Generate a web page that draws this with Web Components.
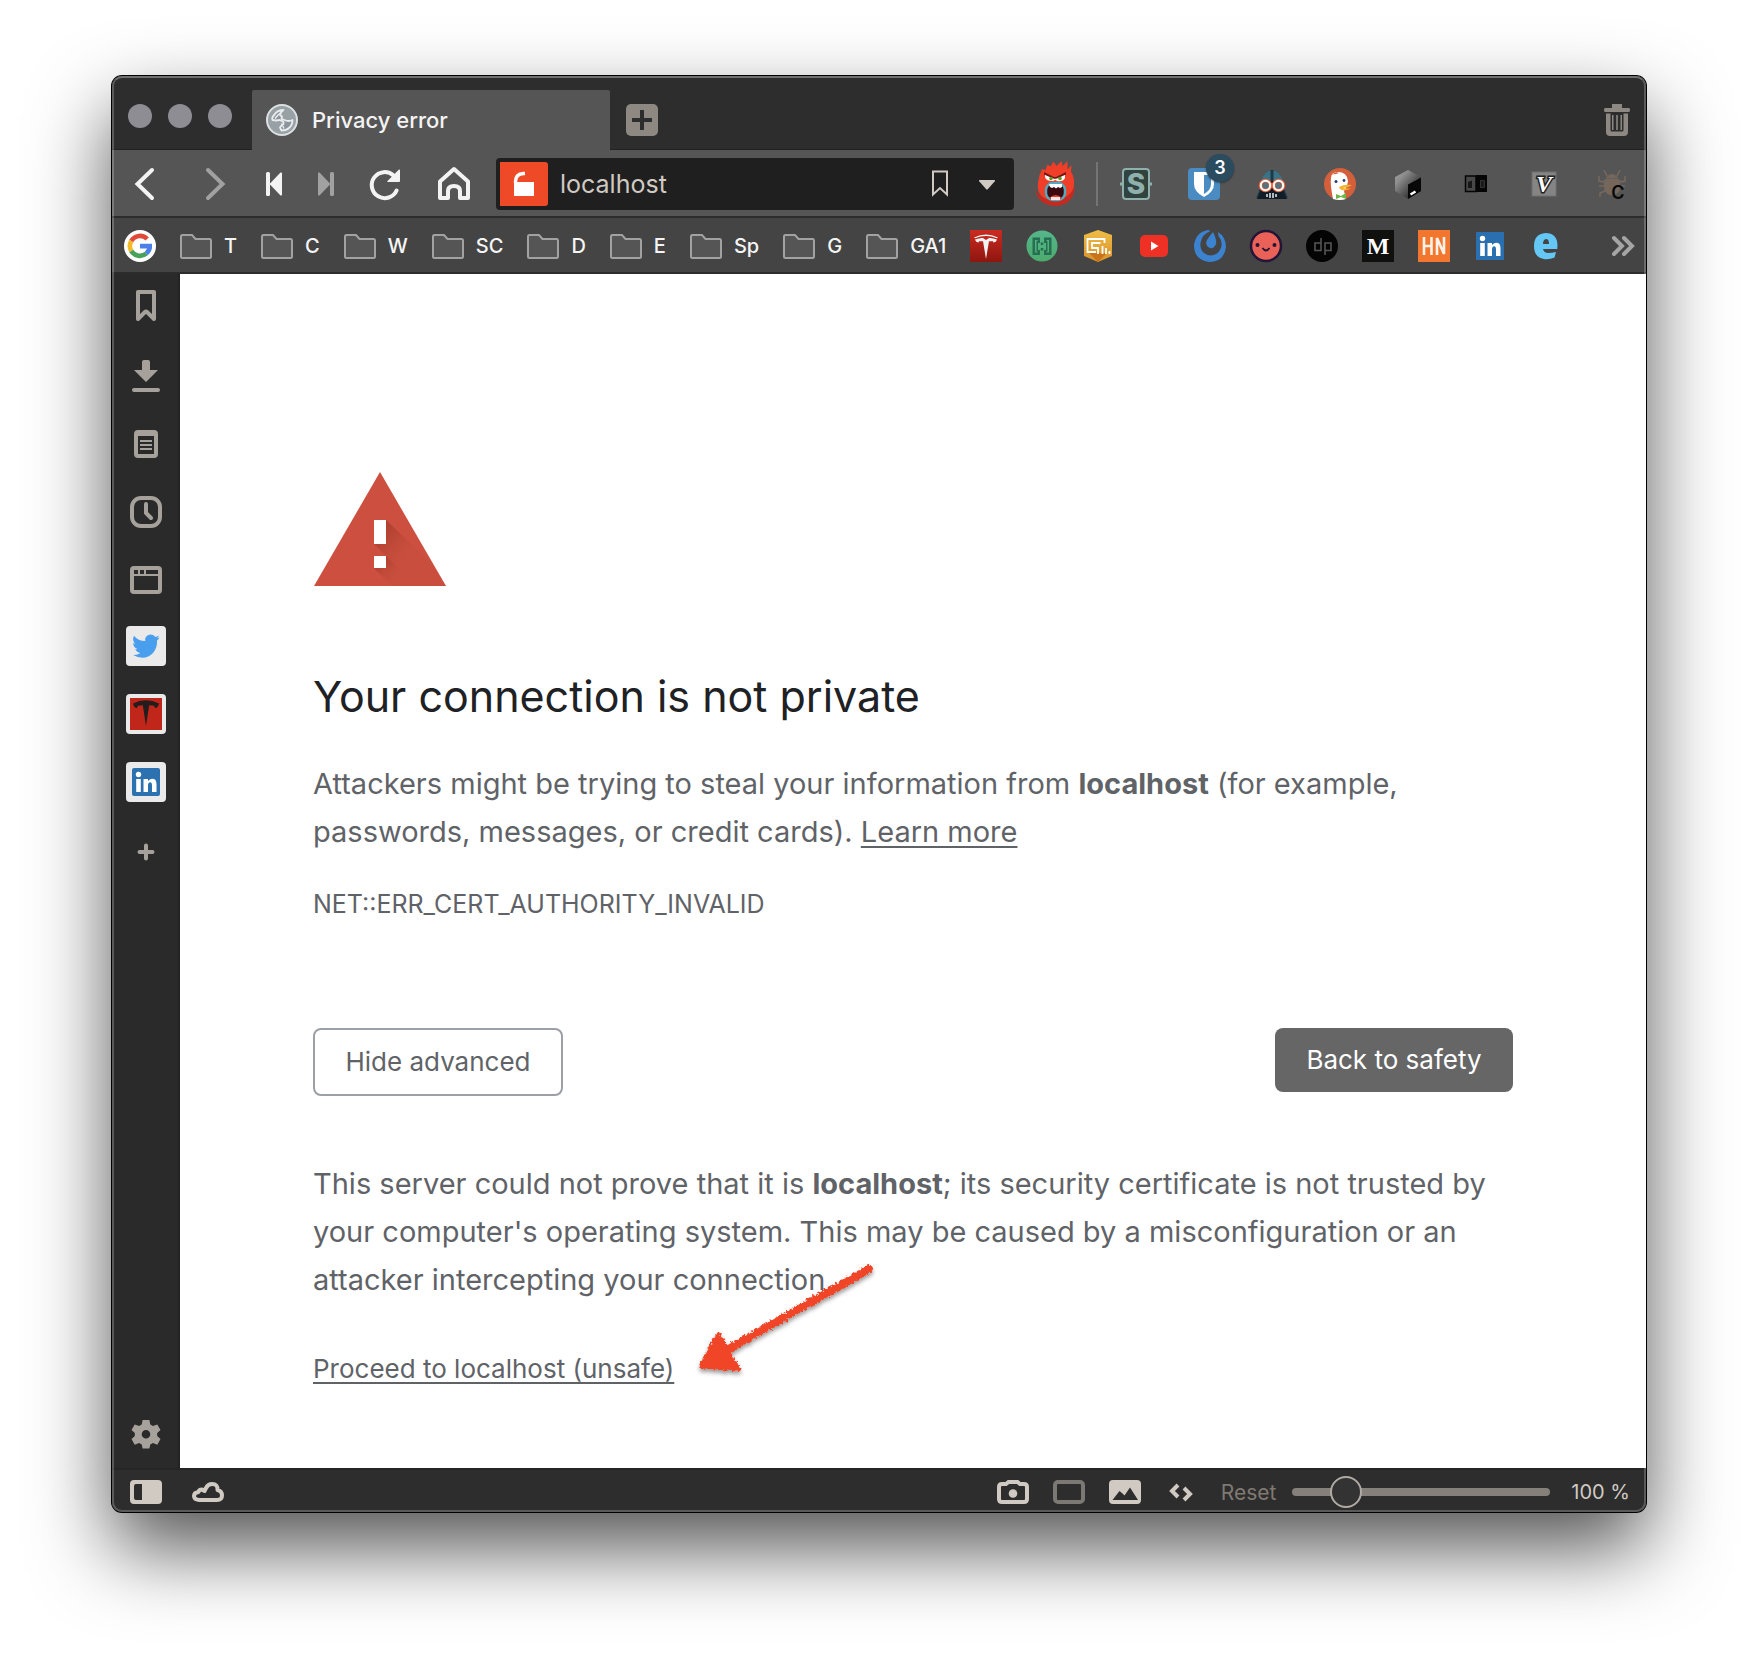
<!DOCTYPE html>
<html lang="en">
<head>
<meta charset="utf-8">
<title>Privacy error</title>
<style>
  body { margin: 0; background: #fff; font-family: Inter, "Noto Sans", sans-serif; }
</style>
</head>
<body>
<browser-window>
  <tab-strip slot="tabs">Privacy error</tab-strip>
  <nav-bar slot="nav"></nav-bar>
  <bookmark-bar slot="bookmarks">
    <bookmark-link icon="google" label="Google"></bookmark-link>
    <bookmark-folder>T</bookmark-folder>
    <bookmark-folder>C</bookmark-folder>
    <bookmark-folder>W</bookmark-folder>
    <bookmark-folder>SC</bookmark-folder>
    <bookmark-folder>D</bookmark-folder>
    <bookmark-folder>E</bookmark-folder>
    <bookmark-folder>Sp</bookmark-folder>
    <bookmark-folder>G</bookmark-folder>
    <bookmark-folder>GA1</bookmark-folder>
    <bookmark-link icon="tesla" label="Tesla"></bookmark-link>
    <bookmark-link icon="brackets" label="Brackets"></bookmark-link>
    <bookmark-link icon="hexbox" label="Analytics"></bookmark-link>
    <bookmark-link icon="youtube" label="YouTube"></bookmark-link>
    <bookmark-link icon="mattermost" label="Mattermost"></bookmark-link>
    <bookmark-link icon="smile" label="Smile"></bookmark-link>
    <bookmark-link icon="dp" label="dp"></bookmark-link>
    <bookmark-link icon="medium" label="Medium"></bookmark-link>
    <bookmark-link icon="hn" label="Hacker Noon"></bookmark-link>
    <bookmark-link icon="linkedin" label="LinkedIn"></bookmark-link>
    <bookmark-link icon="eletter" label="e"></bookmark-link>
  </bookmark-bar>
  <side-panel slot="side"></side-panel>
  <privacy-page slot="page"></privacy-page>
  <status-bar slot="status"></status-bar>
</browser-window>

<script>
const ICONS = {
  back: `<path d="M22 2 7.500 16 22 30" fill="none" stroke="currentColor" stroke-width="4" stroke-linecap="round"/>`,
  forward: `<path d="M10 2 24.500 16 10 30" fill="none" stroke="currentColor" stroke-width="4" stroke-linecap="round"/>`,
  rewind: `<g fill="currentColor"><rect x="8" y="4" width="4" height="24" rx="1.500"/><path d="M22.500 4.600Q24 4 24 5.500v21q0 1.500-1.500.900L11.500 16z"/></g>`,
  fast: `<g fill="currentColor"><rect x="20" y="4" width="4" height="24" rx="1.500"/><path d="M9.500 4.600Q8 4 8 5.500v21q0 1.500 1.500.900L20.500 16z"/></g>`,
  reload: `<path d="M26.600 22.500A13 13 0 1 1 23.500 7.500" fill="none" stroke="currentColor" stroke-width="4" stroke-linecap="round"/><path d="M29 1.500Q30 1 30 2.500V13q0 1-1 1H18q-1.500 0-.5-1z" fill="currentColor"/>`,
  home: `<path d="M2 30V13.500L16 1l14 12.500V30h-8v-7q0-5-6-5t-6 5v7z" fill="none" stroke="currentColor" stroke-width="4" stroke-linejoin="round"/>`,
  lock: `<path d="M14 20h20v14H14z" fill="#fff"/><path d="M15.500 21v-1.500q0-7.500 8-8h1.500" fill="none" stroke="#fff" stroke-width="3.500"/>`,
  ribbon: `<path d="M9 3.500h14v23l-7-6.500-7 6.500z" fill="none" stroke="currentColor" stroke-width="2"/>`,
  caret: `<path d="M8.500 12h15q1 .300.300 1.200L17 21q-1 1-2 0l-6.800-7.800Q7.500 12.300 8.500 12z" fill="currentColor"/>`,
  plusbox: `<rect width="32" height="32" rx="5" fill="#8d8982"/><path d="M16 6v20M6 16h20" stroke="#2d2d2d" stroke-width="4"/>`,
  trash: `<g fill="#8d8982"><path d="M11 0h10v4h7q1 0 1 2t-1 2H4q-1 0-1-2t1-2h7z"/><path d="M5 9.500h22V28q0 4-4 4H9q-4 0-4-4zm4.500 0V26q0 1.500 1.500 1.500h10q1.500 0 1.500-1.500V9.500z" fill-rule="evenodd"/><path d="M11 11h1.500v15H11zM15.200 11h1.600v15h-1.600zM19.500 11H21v15h-1.500z"/></g>`,
  globe: `<circle cx="16" cy="16" r="15" fill="#98a1a6" stroke="#dde0e1" stroke-width="2"/><path d="M17.500 6q-6 0-9 4.500-3 3-2 5.500l4 .5 3-.5q3 1 4 2v2q-2 1-3.500 3.500l1.500 3q5 0 7.500-2.500 3.500-3 3.500-8-4 2-8 0l-3-1 .5-2.500-2-1.500q.5-3 3.500-5z" fill="#8b959b" stroke="#e9ebec" stroke-width="1.800" stroke-linejoin="round"/><path d="M9 14.500q3-4 6-6M15.500 19.500l2.500 5" fill="none" stroke="#e9ebec" stroke-width="1.400"/>`,
  monster: `<path d="M3 21Q1 32 10 38q11 7 22 0 8-6 7-19-1-6-3-8l.500-7-4 4.500V0l-5 5-1-5-5 5-3-4.500-3 5-3-2-2 5.500-3.500-1Q4 14 3 21z" fill="#f03e28" transform="translate(1 1)"/><path d="M1 29q5 10 17 11 16 1 23-14-1 18-18 20Q4 46 1 29z" fill="#c52a20"/><path d="M11 14l10 5 10-5v4q-2 4-8 3-1-1-2-1-1 1-3 1-6 0-7-4z" fill="#fff"/><path d="M10 12l10 5h2l10-5v2.500l-9 4h-4l-9-4z" fill="#751813"/><circle cx="17" cy="18.500" r="1.800" fill="#5d9a25"/><circle cx="26" cy="18.500" r="1.800" fill="#5d9a25"/><rect x="12" y="23" width="19" height="17" rx="7" fill="#3b0910" stroke="#54a9be" stroke-width="2.500"/><path d="M15 24h13v3l-2 1-2-1-2 1.500-2-1.500-2 1-2-1z" fill="#fff"/><path d="M15 38q7-6 13 0l-3 2h-7z" fill="#e63d32"/><path d="M17 37h9v3h-9z" fill="#ffe8e0"/>`,
  stylus: `<rect x="3" y="1" width="26" height="30" rx="3" fill="#30433e" stroke="#8fb0ad" stroke-width="2"/><path d="M0 16h3M29 16h3" stroke="#8fb0ad" stroke-width="3"/><text x="16" y="26" text-anchor="middle" font-family="Inter" font-weight="800" font-size="28" fill="#8fb0ad">S</text>`,
  bitwarden: `<rect width="32" height="32" rx="4" fill="#4a8bc2"/><path d="M6 4h20v12q0 8-10 13Q6 24 6 16z" fill="#fff"/><path d="M16 7h7v9q0 6-7 10z" fill="#4a8bc2"/>`,
  vader: `<path d="M1 31l4-12Q6 4 16 2q10 2 11 17l4 12z" fill="#111c26"/><path d="M5 13Q8 3 16 2q8 1 11 11z" fill="#3a7386"/><path d="M16 2v11" stroke="#1f3946" stroke-width="3"/><path d="M1 30l4-10M31 30l-4-10" stroke="#1d3443" stroke-width="1.500"/><path d="M14.500 17h3" stroke="#fff" stroke-width="3"/><g fill="#59737e" stroke="#f1623c" stroke-width="3.600"><circle cx="9.500" cy="17.500" r="5"/><circle cx="22.500" cy="17.500" r="5"/></g><g fill="none" stroke="#fff" stroke-width="2"><circle cx="9.500" cy="17.500" r="4.700"/><circle cx="22.500" cy="17.500" r="4.700"/></g><path d="M11 26v3M14 25v5M17 25v5M20 26v3" stroke="#e9eef0" stroke-width="1.500"/>`,
  duck: `<circle cx="16" cy="16" r="16" fill="#d35f3b"/><path d="M9 31Q6 16 7 10q0-6 7-6 9 0 10 9-1 7-4 10l2 8q-6 2-13 0z" fill="#fff"/><path d="M8 7q3-4 7-2l-3 1q-3 0-4 1z" fill="#d35f3b"/><circle cx="12" cy="13.500" r="1.500" fill="#263f73"/><circle cx="20" cy="12.500" r="1.400" fill="#263f73"/><path d="M15 19q5-3 13-2-4 3-9 3 4 1 8 0-3 3-9 2-3-1-3-3z" fill="#f4b32a"/><path d="M12 26l5 2 5-3v6l-5-2-5 2z" fill="#69b846"/>`,
  cube: `<defs><linearGradient id="cg" x1="0" y1="0" x2="1" y2="1"><stop stop-color="#a0a0a0"/><stop offset=".25" stop-color="#8e8e8e"/><stop offset=".7" stop-color="#3c3c3c"/></linearGradient></defs><path d="M16 2l13 7v14l-13 8-13-8V9z" fill="url(#cg)"/><path d="M16 16.500l13-7V23l-13 8z" fill="#080808"/><path d="M18.500 26.500l5-3" stroke="#fff" stroke-width="2.500"/>`,
  book: `<path d="M5.500 8H16v15.500H5.500z" fill="#484848" stroke="#050505" stroke-width="1.500"/><path d="M16 7h11v17H16z" fill="#050505"/><path d="M8 14l4-1.500V20H8z" fill="#171717"/><path d="M20.500 12.500h4v7h-4z" fill="#1c1c1c" stroke="#333"/>`,
  vbox: `<rect x="4" y="4" width="24" height="24" fill="#858585" stroke="#717171"/><text x="16" y="24" text-anchor="middle" font-family="Liberation Serif" font-weight="700" font-style="italic" font-size="24" fill="#fff" stroke="#222" stroke-width="3" paint-order="stroke">V</text>`,
  bug: `<g fill="#75675c" stroke="#75675c"><path d="M10 10q6-7 12 0z"/><path d="M8 12q8-2 16 0l-1 11q-3 4-7 4t-7-4z"/><path d="M11 8L8 2M21 8l3-6M8 14L3 13V8M24 14l5-1V8M8 18H3M24 18h5M9 23l-5 2v4" fill="none" stroke-width="1.600"/></g><text x="22" y="31" text-anchor="middle" font-family="Inter" font-weight="600" font-size="18" fill="#080808">C</text>`,
  google: `<circle cx="16" cy="16" r="16" fill="#fff"/><g fill="none" stroke-width="4.600"><path d="M23.200 9A10 10 0 0 0 7.300 11" stroke="#df4b38"/><path d="M7.300 11a10 10 0 0 0 0 10" stroke="#f3b928"/><path d="M7.300 21a10 10 0 0 0 15 2.500" stroke="#48a15a"/><path d="M22.300 23.500A9.500 9.500 0 0 0 25.700 16" stroke="#4c7fe8"/></g><path d="M16 13.800h12v4.600H16z" fill="#4c7fe8"/>`,
  tesla: `<defs><linearGradient id="tg" x2="0" y2="1"><stop stop-color="#cc2b20"/><stop offset="1" stop-color="#8e160f"/></linearGradient></defs><path d="M0 0h32v32H0z" fill="url(#tg)"/><path d="M4 7.500q12-6 24 0l-1 .700q-11-4.500-22 0zM5 9.500q5-2 8-1.500l3 2 3-2q3-.500 8 1.500-1 3-3.500 3l-.500-1.200L19 11.200 16 29l-3-17.800-4 .100-.500 1.200Q6 12.500 5 9.500z" fill="#f2f2f2"/>`,
  brackets: `<defs><linearGradient id="bg" x2="0" y2="1"><stop stop-color="#55b68c"/><stop offset="1" stop-color="#4cab6b"/></linearGradient></defs><circle cx="16" cy="16" r="15.500" fill="url(#bg)"/><g fill="#276f52"><path d="M6.500 7.500H14V13h-2v7h2v5H6.500zM9 10v12.500h2.500v-1H10.500v-10.500h1V10z" fill-rule="evenodd"/><path d="M25.500 7.500H18V13h2v7h-2v5h7.500zM23 10v12.500h-2.500v-1h1v-10.500h-1V10z" fill-rule="evenodd"/><path d="M14.700 12.500h2.600V15h-2.600zM14.700 18h2.600v2.500h-2.600z"/></g>`,
  hexbox: `<defs><linearGradient id="hg" x2="0" y2="1"><stop stop-color="#efbd45"/><stop offset="1" stop-color="#d9912b"/></linearGradient></defs><path d="M16 0l14 5v21l-14 6-14-6V5z" fill="url(#hg)"/><path d="M7 23h18l-9 9z" fill="#c9741a"/><path d="M22.500 13V9H5.500v13H14M18.500 13H10v5h6v6M20.500 16v8M24 18v6M27.500 21v3" fill="none" stroke="#fff" stroke-width="1.800"/>`,
  youtube: `<rect x="2" y="5" width="28" height="22" rx="5" fill="#ee3124"/><path d="M13 11.500v9l7.500-4.500z" fill="#fff"/>`,
  mattermost: `<path d="M14 0Q2 2 0 15q0 15 15 17 15 0 17-15Q32 7 24 2l.500 4q5 6 2 13-4 8-13 6-8-3-7-12Q8 4 16.500 1z" fill="#3b83d0"/><path d="M19 2q4 8 3 12-2 5-6 4-5-2-3.500-7Q14 8 19 2z" fill="#3b83d0"/>`,
  smile: `<circle cx="16" cy="16" r="15" fill="#ea6157" stroke="#221538" stroke-width="2.500"/><circle cx="7.500" cy="15" r="2" fill="#221538"/><circle cx="24.500" cy="15" r="2" fill="#221538"/><path d="M12.500 18q3.500 5 7 0" fill="none" stroke="#221538" stroke-width="1.800"/>`,
  dp: `<circle cx="16" cy="16" r="16" fill="#040404"/><path d="M15 8v12.500H9v-7.500h6M19 25V13h6v7.500h-6" fill="none" stroke="#555" stroke-width="1.600"/>`,
  medium: `<path d="M0 0h32v32H0z" fill="#10100f"/><text x="16" y="24" text-anchor="middle" font-family="Liberation Serif" font-weight="700" font-size="24" fill="#fff">M</text>`,
  hn: `<path d="M0 0h32v32H0z" fill="#f2762e"/><g fill="none" stroke="#fff3e9" stroke-width="2.600"><path d="M6 7v18M13.500 7v18M6 16h7.500M19 25V8l7 16V7"/></g>`,
  linkedin: `<path d="M2 2h28v28H2z" fill="#2a70b0"/><circle cx="8.500" cy="8.500" r="2.700" fill="#fff"/><path d="M6.200 13h4.600v13H6.200zM13.500 13H18v2q4-4 7.500-1 1 1.500 1 4.500V26H22v-7q0-3-2-2.700-2 0-2 2.700v7h-4.500z" fill="#fff"/>`,
  eletter: `<path d="M4 16Q4 4 15.500 3 27 3 27.500 15l-.200 4H13q1 4 5 4 4 0 8-1l-1.500 5.500q-4 2-9.500 1.700Q4 28 4 16zm9-2h6q0-5-3-5-3 .500-3 5z" fill="#65c7f5" fill-rule="evenodd"/>`,
  more: `<path d="M6 8l8 8-8 8M16 8l8 8-8 8" fill="none" stroke="#a5a5a5" stroke-width="4" stroke-linecap="round"/>`,
  folder: `<path d="M1 6.500Q1 5 2.500 5H12l3.500 4H30q1 0 1 1.500v16q0 1.500-1.500 1.500h-27Q1 28 1 26.500z" fill="#555" stroke="#a2a2a2" stroke-width="2"/>`,
  sideBookmark: `<path d="M8 0h16v27l-7-7q-1-1-2 0l-7 7z" fill="none" stroke="currentColor" stroke-width="4" stroke-linejoin="round"/>`,
  download: `<path d="M14 0h4q2 0 2 2v8h8L16 22 4 10h8V2q0-2 2-2z" fill="currentColor"/><path d="M4 30h24" stroke="currentColor" stroke-width="4" stroke-linecap="round"/>`,
  notes: `<path d="M8 2h16q4 0 4 4v20q0 4-4 4H8q-4 0-4-4V6q0-4 4-4zM8 8v18h16V8zM10 12h12v2H10zM10 16h12v2H10zM10 20h12v2H10z" fill="currentColor" fill-rule="evenodd"/>`,
  history: `<rect x="2" y="2" width="28" height="28" rx="9" fill="none" stroke="currentColor" stroke-width="4"/><path d="M16 8v9l5 5" fill="none" stroke="currentColor" stroke-width="4" stroke-linecap="round"/>`,
  windowIcon: `<path d="M4 2h24q4 0 4 4v20q0 4-4 4H4q-4 0-4-4V6q0-4 4-4zM4 12v14h24V12zM4 6v4h4V6zM10 6v4h4V6zM16 6v4h12V6z" fill="currentColor" fill-rule="evenodd"/>`,
  twitter: `<rect width="40" height="40" rx="4" fill="#eaeaea"/><path d="M33.500 11.500q-1.500.700-2.500.700 1.500-1 2-2.700-2 1.200-3.500 1.400-4-4-8-1.500-3 2-2.200 5.600Q12 15 8 9.700q-2.500 5 1.500 8-1 0-2.300-.700 0 4.500 4.300 6-1 .300-2.300 0 1.500 3.500 5.200 4Q11 29.500 7 29q12 6.500 20-2 4.500-5 4-12.500 1.500-1 2.500-3z" fill="#4a9eee"/>`,
  teslaTile: `<rect width="40" height="40" rx="4" fill="#eaeaea"/><path d="M4 4h32v32H4z" fill="#c1261b"/><path d="M7 9.500q13-6.500 26 0-1 4.500-4 4.500l-1-2.200-4.800-.600L20 32l-3.200-20.800-4.800.600-1 2.200q-3 0-4-4.500z" fill="#231d1d"/>`,
  linkedinTile: `<rect width="40" height="40" rx="4" fill="#eaeaea"/><rect x="6" y="6" width="28" height="28" rx="2" fill="#2d72b0"/><circle cx="12.500" cy="12.500" r="2.700" fill="#fff"/><path d="M10.200 17h4.600v13h-4.600zM17.500 17H22v2q4-4 7.500-1 1 1.500 1 4.500V30H26v-7q0-3-2-2.700-2 0-2 2.700v7h-4.500z" fill="#fff"/>`,
  add: `<path d="M16 9.500v13M9.500 16h13" stroke="currentColor" stroke-width="4" stroke-linecap="round"/>`,
  gear: `<path d="M12.600 2h6.800l.900 4.600 2.600 1.500 4.400-1.600 3.200 5.600-3.300 3v3l3.300 3-3.200 5.600-4.400-1.600-2.600 1.500-.900 3.900h-6.800l-.900-3.900-2.600-1.500-4.400 1.600-3.200-5.600 3.300-3v-3l-3.300-3 3.200-5.600 4.400 1.600 2.600-1.500zM16 12a4.300 4.300 0 1 0 0 8.600 4.300 4.300 0 0 0 0-8.600z" fill="currentColor" fill-rule="evenodd"/>`,
  panel: `<path d="M4 4h24q4 0 4 4v16q0 4-4 4H4q-4 0-4-4V8q0-4 4-4zM6 8Q4 8 4 10v12q0 2 2 2h6V8z" fill="currentColor" fill-rule="evenodd"/>`,
  cloud: `<path d="M7 24h18q5 0 5-4.500T25.500 14Q26 8 20 8q-4 0-6 4l-1.500 3-2.500-1.500q-3 0-3.500 2.500Q2 16.500 2 20t5 4z" fill="none" stroke="currentColor" stroke-width="4" stroke-linejoin="round"/>`,
  camera: `<path d="M5 8h4l2.500-2h9L23 8h4q3 0 3 3v12q0 3-3 3H5q-3 0-3-3V11q0-3 3-3z" fill="none" stroke="currentColor" stroke-width="4"/><circle cx="16" cy="17.500" r="4.300" fill="currentColor"/>`,
  tiling: `<rect x="2" y="6" width="28" height="20" rx="3" fill="none" stroke="#7c7975" stroke-width="4"/>`,
  picture: `<path d="M4 4h24q4 0 4 4v16q0 4-4 4H4q-4 0-4-4V8q0-4 4-4zM3.500 24h25.500L21 11.500l-5.500 8-2-2-3-2.500z" fill="currentColor" fill-rule="evenodd"/>`,
  code: `<path d="M13 9l-6 6 6 6M19 12l6 6-6 6" fill="none" stroke="currentColor" stroke-width="4"/>`
};

const define = (tag, css, html) => customElements.define(tag, class extends HTMLElement {
  constructor() {
    super();
    this.attachShadow({ mode: 'open' });
  }
  connectedCallback() {
    this.shadowRoot.innerHTML = `<style>*{box-sizing:border-box}${css}</style>` +
      (typeof html === 'function' ? html(this) : html);
  }
});

define('ui-icon', `:host{display:block;flex:none}svg{display:block;overflow:visible}`, el => {
  const w = el.getAttribute('w') || 32, h = el.getAttribute('h') || w;
  return `<svg width="${w}" height="${h}" viewBox="0 0 ${w} ${h}" aria-hidden="true">${ICONS[el.getAttribute('name')]}</svg>`;
});

const BUTTON = `button{appearance:none;border:0;margin:0;padding:0;background:none;color:inherit;font:inherit;display:flex;align-items:center;justify-content:center}`;
const btn = (icon, label, cls = '', w = 32, h = w) =>
  `<button class="${cls}" aria-label="${label}"><ui-icon name="${icon}" w="${w}" h="${h}"></ui-icon></button>`;

define('browser-window', `
  :host{display:flex;min-height:100vh;box-sizing:border-box;padding:76px 112px 148px}
  .frame{position:relative;flex:1;min-width:0;display:flex;flex-direction:column;border-radius:10px;overflow:hidden;background:#2d2d2d}
  .shade{flex:1;display:flex;min-width:0;border-radius:10px;box-shadow:0 0 0 1px #000,0 36px 80px rgba(0,0,0,.68)}
  .frame::after{content:"";position:absolute;inset:0;border:2px solid rgba(255,255,255,.22);border-top-color:rgba(255,255,255,.32);border-radius:10px;pointer-events:none}
  .body{flex:1;display:flex;min-height:0}
  ::slotted([slot=page]){flex:1;min-width:0}
`, `<div class="shade"><div class="frame"><slot name="tabs"></slot><slot name="nav"></slot><slot name="bookmarks"></slot>
  <div class="body"><slot name="side"></slot><slot name="page"></slot></div><slot name="status"></slot></div></div>`);

define('tab-strip', `${BUTTON}
  :host{display:flex;align-items:flex-end;height:74px;background:#2d2d2d;box-shadow:inset 0 -1px #222;color:#f3f3f3}
  .lights{display:flex;gap:16px;align-self:center;padding:6px 20px 0 16px;width:140px}
  .lights button{width:24px;height:24px;border-radius:50%;background:#8e8d93}
  .tab{display:flex;align-items:center;gap:14px;width:358px;height:60px;padding:0 14px;background:#555;border-radius:2px 2px 0 0;font-size:22px;font-weight:500}
  .new{width:64px;height:60px}
  .trash{margin-left:auto;width:58px;height:60px}
`, `<div class="lights"><button aria-label="Close"></button><button aria-label="Minimize"></button><button aria-label="Zoom"></button></div>
  <div class="tab"><ui-icon name="globe"></ui-icon><span><slot></slot></span></div>
  ${btn('plusbox', 'New tab', 'new')}${btn('trash', 'Closed tabs', 'trash')}`);

define('nav-bar', `${BUTTON}
  :host{display:flex;align-items:center;height:68px;padding-top:2px;border-bottom:2px solid #2c2c2c;background:#555;color:#f3f3f3;flex:none;box-sizing:border-box}
  .w{width:68px;height:64px}.n{width:52px;height:64px}.off{color:#a1a1a1}
  .url{flex:1;min-width:0;display:flex;align-items:center;height:52px;margin-left:8px;padding:4px;background:#1f1f1f;border-radius:4px;color:#d0cac3}
  .lock{width:48px;height:44px;background:#ef4a27;border-radius:0 3px 3px 0}
  input{flex:1;min-width:0;border:0;outline:0;margin:0;padding:0 12px;background:none;color:inherit;font:400 25px/44px Inter,sans-serif}
  .mark{width:48px}.drop{width:46px}
  .shield{width:82px;height:64px}
  .sep{width:2px;height:44px;margin-right:4px;background:#747474}
  .ext{position:relative;flex:none;width:68px;height:64px}
  .badge{position:absolute;left:36px;top:2px;width:28px;height:28px;border-radius:50%;background:#2b4b5f;color:#fff;font-size:18px;font-weight:600;line-height:28px;text-align:center;box-shadow:0 1px 2px #0006}
`, `${btn('back', 'Back', 'w')}${btn('forward', 'Forward', 'w off')}${btn('rewind', 'Rewind', 'n')}${btn('fast', 'Fast forward', 'n off')}${btn('reload', 'Reload', 'w')}${btn('home', 'Home', 'w')}
  <div class="url">${btn('lock', 'Site not secure', 'lock', 48, 44)}<input type="text" aria-label="Address" value="localhost">
  ${btn('ribbon', 'Bookmark page', 'mark')}${btn('caret', 'Typed history', 'drop')}</div>
  ${btn('monster', 'Blocker', 'shield', 42, 48)}<div class="sep"></div>
  ${btn('stylus', 'Stylus', 'ext')}
  <button class="ext" aria-label="Bitwarden"><ui-icon name="bitwarden"></ui-icon><span class="badge">3</span></button>
  ${[['vader', 'Incognito'], ['duck', 'DuckDuckGo'], ['cube', 'Cube'], ['book', 'Reader'], ['vbox', 'V'], ['bug', 'Bug']].map(([i, l]) => btn(i, l, 'ext')).join('')}`);

define('bookmark-bar', `${BUTTON}
  :host{display:flex;align-items:center;gap:24px;height:56px;padding:2px 6px 0 12px;background:#444;border-bottom:2px solid #2c2c2c;color:#f5f5f5;box-sizing:border-box;flex:none;font-size:20px;font-weight:500}
  button{margin-left:auto;width:32px;height:32px}
`, `<slot></slot>${btn('more', 'More bookmarks')}`);

define('bookmark-folder', `${BUTTON}:host{display:block;flex:none}button{gap:12px;height:52px}`,
  `<button><ui-icon name="folder"></ui-icon><span><slot></slot></span></button>`);

define('bookmark-link', `:host{display:block;flex:none}a{display:block}`,
  el => `<a href="#" aria-label="${el.getAttribute('label')}"><ui-icon name="${el.getAttribute('icon')}"></ui-icon></a>`);

define('side-panel', `${BUTTON}
  :host{display:flex;flex-direction:column;width:68px;flex:none;box-sizing:border-box;background:#2a2a2a;border-right:2px solid #232323;color:#a6a19a}
  button{width:68px;height:68px}
  .tile{padding-bottom:4px}
  .gear{margin-top:auto}
`, `${btn('sideBookmark', 'Bookmarks')}${btn('download', 'Downloads')}${btn('notes', 'Notes')}${btn('history', 'History')}${btn('windowIcon', 'Windows')}
  ${btn('twitter', 'Twitter', 'tile', 40)}${btn('teslaTile', 'Tesla', 'tile', 40)}${btn('linkedinTile', 'LinkedIn', 'tile', 40)}${btn('add', 'Add web panel')}${btn('gear', 'Settings', 'gear')}`);

define('privacy-page', `${BUTTON}
  :host{display:block;background:#fff;color:#5f6368;font-size:29px;line-height:48px}
  main{max-width:1200px;margin:0 auto;padding:198px 0 80px}
  h1{margin:82px 0 0;color:#202124;font-size:43px;line-height:56px;font-weight:400}
  p{margin:36px 0 0}
  a{color:inherit;text-decoration:underline;text-decoration-thickness:2px;text-underline-offset:4px}
  .code{margin-top:34px;font-size:25px;line-height:28px}
  .actions{display:flex;justify-content:space-between;align-items:flex-start;margin-top:110px}
  .actions button{font-size:26px;border-radius:8px}
  .hide{width:250px;height:68px;border:2px solid #9aa0a6}
  .back{width:238px;height:64px;background:#666;color:#fff}
  .details{margin-top:64px}
  .proceed{position:relative;margin-top:51px;font-size:26px;line-height:28px}
  .arrow{position:absolute;left:376px;top:-100px;overflow:visible;pointer-events:none}
  .warn{display:block}
`, `<main>
  <svg class="warn" width="134" height="114" viewBox="0 0 134 114" aria-hidden="true">
    <defs>
      <linearGradient id="sa" gradientUnits="userSpaceOnUse" x1="66" y1="62" x2="90" y2="86"><stop stop-color="#a33a2a" stop-opacity=".7"/><stop offset="1" stop-color="#b94935" stop-opacity=".2"/></linearGradient>
      <linearGradient id="sb" gradientUnits="userSpaceOnUse" x1="66" y1="90" x2="82" y2="106"><stop stop-color="#a33a2a" stop-opacity=".7"/><stop offset="1" stop-color="#b94935" stop-opacity="0"/></linearGradient>
    </defs>
    <path d="M67 0l66 114H1z" fill="#cd4f3f"/>
    <path d="M73 48l43 41 17 25H79L73 108V84L61 72z" fill="url(#sa)"/>
    <path d="M73 84l30 30H79L61 96z" fill="url(#sb)"/>
    <path d="M61 48h12v24H61zM61 84h12v12H61z" fill="#fff"/>
  </svg>
  <h1>Your connection is not private</h1>
  <p>Attackers might be trying to steal your information from <strong>localhost</strong> (for example, passwords, messages, or credit cards). <a href="#">Learn more</a></p>
  <p class="code">NET::ERR_CERT_AUTHORITY_INVALID</p>
  <div class="actions"><button class="hide">Hide advanced</button><button class="back">Back to safety</button></div>
  <p class="details">This server could not prove that it is <strong>localhost</strong>; its security certificate is not trusted by your computer's operating system. This may be caused by a misconfiguration or an attacker intercepting your connection.</p>
  <p class="proceed"><a href="#">Proceed to localhost (unsafe)</a>
    <svg class="arrow" width="190" height="130" viewBox="0 0 190 130" aria-hidden="true">
      <defs><filter id="rough" x="-10%" y="-10%" width="120%" height="125%"><feTurbulence type="fractalNoise" baseFrequency=".35" numOctaves="2" seed="4"/><feDisplacementMap in="SourceGraphic" scale="6" xChannelSelector="R" yChannelSelector="G" result="d"/><feDropShadow in="d" dx="0" dy="3" stdDeviation="2" flood-opacity=".4"/></filter></defs>
      <g filter="url(#rough)" fill="#f04427" stroke="#f04427" stroke-linejoin="round"><path d="M180 14L38 95" stroke-width="8" stroke-linecap="round"/><path d="M29 80L13 111l36 3z" stroke-width="5"/></g>
    </svg></p>
</main>`);

define('status-bar', `${BUTTON}
  :host{display:flex;align-items:center;height:44px;flex:none;box-sizing:border-box;padding:2px 16px 0 18px;background:#2d2d2d;border-top:2px solid #252525;color:#d0cac3;font-size:20px}
  .left{display:flex;gap:30px}
  .right{display:flex;align-items:center;gap:24px;margin-left:auto}
  .reset{color:#7f7972;font-size:21px}
  input{appearance:none;width:258px;height:32px;margin:0 0 0 -8px;background:none}
  input::-webkit-slider-runnable-track{height:8px;border-radius:4px;background:#858079}
  input::-webkit-slider-thumb{appearance:none;width:32px;height:32px;margin-top:-12px;border:2px solid #b0aaa3;border-radius:50%;background:#333}
  output{margin-left:-3px}
`, `<div class="left">${btn('panel', 'Toggle panel')}${btn('cloud', 'Sync')}</div>
  <div class="right">${btn('camera', 'Capture page')}${btn('tiling', 'Page tiling')}${btn('picture', 'Toggle images')}${btn('code', 'Page actions')}
  <button class="reset">Reset</button><input id="zoom" type="range" min="20" max="500" value="100" aria-label="Page zoom"><output for="zoom">100 %</output></div>`);
</script>
</body>
</html>
